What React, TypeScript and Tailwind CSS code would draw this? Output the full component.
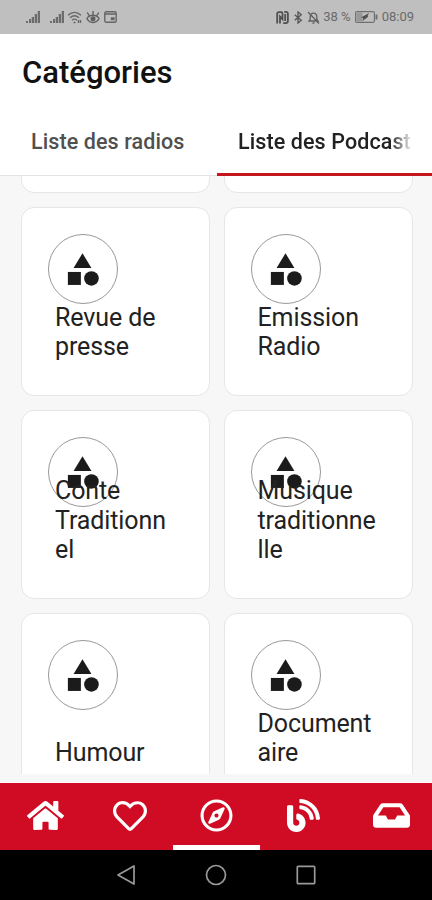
import React, { useState } from 'react';
import clsx from 'clsx';
import { FaHome, FaRegHeart, FaRegCompass, FaBlog, FaInbox } from 'react-icons/fa';
import { MdCategory } from 'react-icons/md';

const categories = [
  'Revue de presse',
  'Emission Radio',
  'Conte Traditionnel',
  'Musique traditionnelle',
  'Humour',
  'Documentaire',
];

const navItems = [
  { id: 'home', icon: <FaHome className="h-[33px] w-[37px]" />, className: 'pl-[4px]' },
  { id: 'favorites', icon: <FaRegHeart className="size-[34px]" />, className: '' },
  { id: 'explore', icon: <FaRegCompass className="size-[33px]" />, className: '' },
  { id: 'blog', icon: <FaBlog className="size-[33px]" />, className: '' },
  { id: 'inbox', icon: <FaInbox className="h-[33px] w-[37px]" />, className: 'pl-[5px]' },
];

const Signal = () => (
  <svg viewBox="0 0 14 12" className="h-3 w-3.5" fill="#6c6c6c">
    <path d="M0 10h2v2H0zM3 8h2v4H3zM5.7 6H8v6H5.7zM8.7 3H11v9H8.7zM11.7 0H14v12h-2.3z" />
  </svg>
);

const StatusBar = () => (
  <div className="flex h-[34px] shrink-0 items-center bg-[#bfbfbf] pl-[26px] pr-[18px] text-[#6a6a6a]">
    <Signal />
    <div className="ml-[10px] flex items-center gap-[3px]">
      <Signal />
      <svg viewBox="0 0 15 13" className="h-[13px] w-[15px]" fill="none" stroke="#686868" strokeWidth="1.4">
        <path d="M1 4.2c4-3.6 9-3.6 13 0M3 6.8c2.8-2.5 6.2-2.5 9 0M5 9.2c1.6-1.4 3.4-1.4 5 0" />
        <path d="M6.5 11.5h2M11.5 9v3M13.5 9v3" />
      </svg>
      <svg viewBox="0 0 14 13" className="ml-px h-[13px] w-3.5" fill="none" stroke="#606060" strokeWidth="1.4">
        <path d="M1 7.5C3.5 3.2 10.5 3.2 13 7.5 10.5 12.8 3.5 12.8 1 7.5zM7 0v4M1.2 1.5l2 3.2M12.8 1.5l-2 3.2" />
        <circle cx="7" cy="7.8" r="1.8" fill="#606060" />
      </svg>
      <svg viewBox="0 0 13 12" className="ml-px h-3 w-[13px]" fill="none" stroke="#666" strokeWidth="1.4">
        <rect x=".8" y=".8" width="11.4" height="10.4" rx="1.5" />
        <path d="M1 3h11M7.5 7h2.5v1.5H7.5z" />
      </svg>
    </div>
    <div className="ml-auto flex items-center text-[13px]">
      <svg viewBox="0 0 13 13" className="h-[13px] w-[13px]" fill="none" stroke="#505050" strokeWidth="1.8">
        <path d="M1.2 12.5V3c0-1.2.6-1.8 1.8-1.8h2.2c.9 0 1.3.5 1.3 1.3v5.7L4 5.6v6.9M8.2.9h1.6c1.4 0 2.1.7 2.1 2.1v7c0 1.4-.7 2.1-2.1 2.1H7.2M9.2 3v7" />
      </svg>
      <svg viewBox="0 0 10 14" className="ml-[4px] h-[13px] w-[10px]" fill="none" stroke="#555" strokeWidth="1.4">
        <path d="M1.5 4l7 6L5 13V1l3.5 3-7 6" />
      </svg>
      <svg viewBox="0 0 13 13" className="ml-[4px] mr-[3px] h-[13px] w-[13px]" fill="none" stroke="#606060" strokeWidth="1.3">
        <path d="M2 10h9L9.8 8V5.5C9.8 1 3.2 1 3.2 5.5V8zM5.5 12h2M1 1l11 11.5" />
      </svg>
      <span>38 %</span>
      <svg viewBox="0 0 23 12" className="ml-[4px] h-3 w-[23px]" fill="none" stroke="#707070">
        <rect x=".6" y=".6" width="18.8" height="10.8" rx="1.5" strokeWidth="1.2" />
        <path d="M1.5 1.5h6v9h-6z" fill="#999" stroke="none" />
        <path d="M6 6.5L14 2l-1.5 3.2 1 .3L7.5 10l.8-3z" fill="#505050" stroke="none" />
        <path d="M21.5 3.5v5" strokeWidth="2" />
      </svg>
      <span className="ml-[4px]">08:09</span>
    </div>
  </div>
);

const CategoryCard = ({ name }: { name: string }) => (
  <div className="relative flex h-[189px] items-end rounded-[13px] border border-[#e6e6e6] bg-white pl-[33px] pr-[31px] pb-[33px]">
    <div className="absolute left-[26px] top-[26px] flex size-[70px] items-center justify-center rounded-full border border-[#999] pr-px">
      <MdCategory className="size-[39px] text-[#1b1b1b]" />
    </div>
    <p className="relative w-full break-words text-[25px] leading-[29.6px] tracking-[-0.1px] text-[#222]">{name}</p>
  </div>
);

const App: React.FC = () => {
  const [tab, setTab] = useState(1);
  const [page, setPage] = useState('explore');

  return (
    <div className="flex h-[900px] w-[432px] flex-col overflow-hidden bg-white font-['Roboto',sans-serif]">
      <StatusBar />
      <header className="h-[74px] shrink-0 px-[22px] pt-[21px]">
        <h1 className="text-[31px] font-medium leading-[36px] text-[#111]">Catégories</h1>
      </header>
      <div className="flex h-[68px] shrink-0 border-b border-[#e3e3e3] text-[21.5px] font-medium tracking-[0.1px]">
        <button
          onClick={() => setTab(0)}
          className={clsx(
            '-mb-px w-[217px] whitespace-nowrap border-b-[3px] pl-[31px] pt-[3px] text-left',
            tab === 0 ? 'border-[#c5161d] text-[#222]' : 'border-transparent text-[#505050]'
          )}
        >
          Liste des radios
        </button>
        <button
          onClick={() => setTab(1)}
          className={clsx(
            '-mb-px w-[215px] whitespace-nowrap border-b-[3px] pl-[21px] pt-[3px] text-left',
            tab === 1 ? 'border-[#c5161d] text-[#222]' : 'border-transparent text-[#505050]'
          )}
        >
          <span className="inline-block [mask-image:linear-gradient(to_right,black_88%,transparent_101%)]">
            Liste des Podcast
          </span>
        </button>
      </div>

      <main className="h-[598px] shrink-0 overflow-hidden bg-[#f7f7f7] px-[21px]">
        <div className="-mt-[172px] grid grid-cols-[189px_189px] gap-x-[13.5px] gap-y-[14px]">
          <CategoryCard name="" />
          <CategoryCard name="" />
          {categories.map(name => (
            <CategoryCard key={name} name={name} />
          ))}
        </div>
      </main>
      <div className="h-[9px] shrink-0 border-b border-white bg-[#f6f8f8]" />

      <nav className="grid h-[67px] shrink-0 grid-cols-[87px_86px_87px_86px_86px] bg-[#d00b24] text-white">
        {navItems.map(item => (
          <button
            key={item.id}
            onClick={() => setPage(item.id)}
            className={clsx(
              'flex items-center justify-center border-b-[5px] pt-[3px]',
              page === item.id ? 'border-white' : 'border-transparent',
              item.className
            )}
          >
            {item.icon}
          </button>
        ))}
      </nav>

      <div className="flex flex-1 items-center justify-center bg-black">
        <svg viewBox="0 0 20 22" className="h-[22px] w-5" fill="none" stroke="#999" strokeWidth="1.7" strokeLinejoin="round">
          <path d="M18 2v18L2 11z" />
        </svg>
        <svg viewBox="0 0 22 22" className="mx-[69px] size-[22px]" fill="none" stroke="#999" strokeWidth="1.7">
          <circle cx="11" cy="11" r="9.5" />
        </svg>
        <svg viewBox="0 0 20 20" className="size-5" fill="none" stroke="#999" strokeWidth="1.7">
          <rect x="1.3" y="1.3" width="17.4" height="17.4" rx="1" />
        </svg>
      </div>
    </div>
  );
};

export default App;
